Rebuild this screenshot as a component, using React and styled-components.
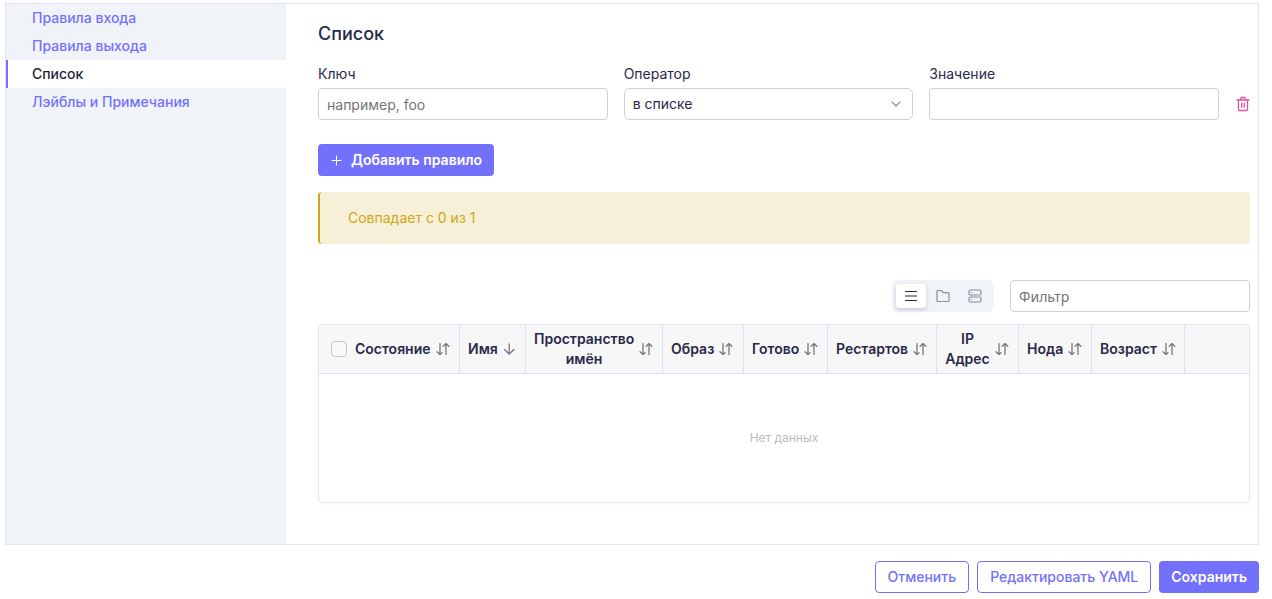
import React, { useState } from "react";
import styled, { createGlobalStyle, css } from "styled-components";

const GlobalStyle = createGlobalStyle`
  * {
    box-sizing: border-box;
  }
  body {
    margin: 0;
    background: #fff;
    color: #29294a;
    font: 400 14px/20px Inter, "Liberation Sans", sans-serif;
  }
  button, input, select {
    font: inherit;
    color: inherit;
  }
`;

const Page = styled.div`
  padding: 3px 13px 6px 5px;
`;

const Panel = styled.div`
  display: flex;
  border: 1px solid #e6e3fd;
`;

const Sidebar = styled.nav`
  flex: 0 0 280px;
  background: #f0f4f9;
`;

const SideLink = styled.a`
  display: block;
  padding: 4px 8px 4px 26px;
  font-weight: 500;
  color: #7371fc;
  text-decoration: none;
  ${(props) =>
    props.$active &&
    css`
      padding-left: 24px;
      border-left: 2px solid #7371fc;
      background: #fff;
      color: #1f1f38;
    `}
`;

const Content = styled.main`
  flex: 1;
  min-width: 0;
  padding: 18px 8px 41px 32px;
`;

const Title = styled.h2`
  margin: 0 0 18px;
  font-size: 18px;
  line-height: 24px;
  font-weight: 500;
`;

const Rule = styled.div`
  display: grid;
  grid-template-columns: repeat(3, minmax(0, 1fr)) 15px;
  gap: 16px;
  align-items: end;
`;

const Field = styled.div`
  display: flex;
  flex-direction: column;
  gap: 4px;
`;

const Label = styled.label`
  font-weight: 400;
`;

const control = css`
  width: 100%;
  height: 32px;
  padding: 0 8px;
  border: 1px solid #cfcfdc;
  border-radius: 4px;
  background: #fff;
  outline: none;
`;

const Input = styled.input`
  ${control};
  &::placeholder {
    color: #757575;
    opacity: 1;
  }
`;

const FilterInput = styled(Input)`
  width: 240px;
  font-family: "Noto Sans", sans-serif;
`;

const SelectBox = styled.div`
  position: relative;
  svg {
    position: absolute;
    top: 8px;
    right: 9px;
    pointer-events: none;
  }
`;

const Select = styled.select`
  ${control};
  border-radius: 6px;
  appearance: none;
`;

const IconButton = styled.button`
  display: flex;
  align-items: center;
  justify-content: flex-start;
  height: 32px;
  padding: 0;
  border: 0;
  background: none;
  color: #e0529c;
  cursor: pointer;
  svg {
    flex: none;
  }
`;

const Button = styled.button`
  display: inline-flex;
  align-items: center;
  gap: 8px;
  height: 32px;
  padding: 0 12px;
  border: ${(props) => (props.$primary ? "0" : "1px solid #7371fc")};
  border-radius: 4px;
  background: ${(props) => (props.$primary ? "#7371fc" : "#fff")};
  color: ${(props) => (props.$primary ? "#fff" : "#7371fc")};
  font-weight: ${(props) => (props.$primary ? 600 : 500)};
  cursor: pointer;
`;

const AddRow = styled.div`
  display: flex;
  margin: 24px 0 16px;
`;

const Banner = styled.div`
  padding: 16px 28px;
  border-left: 2px solid #cfa616;
  border-radius: 4px;
  background: #f6f0d9;
  color: #cfa616;
`;

const Toolbar = styled.div`
  display: flex;
  justify-content: flex-end;
  gap: 16px;
  margin: 36px 0 12px;
`;

const Toggle = styled.div`
  display: flex;
  gap: 2px;
  padding: 4px;
  border-radius: 6px;
  background: #f0f4f9;
`;

const ToggleButton = styled.button`
  display: flex;
  align-items: center;
  justify-content: center;
  width: 30px;
  height: 24px;
  padding: 0;
  border: 0;
  border-radius: 4px;
  background: ${(props) => (props.$active ? "#fff" : "none")};
  box-shadow: ${(props) => (props.$active ? "0 2px 4px rgba(41, 41, 74, 0.2)" : "none")};
  color: ${(props) => (props.$active ? "#29294a" : "#8c8ca1")};
  cursor: pointer;
`;

const TableFrame = styled.div`
  overflow: hidden;
  border: 1px solid #e6e3fd;
  border-radius: 4px;
`;

const Table = styled.table`
  width: 100%;
  table-layout: fixed;
  border-collapse: separate;
  border-spacing: 0;
`;

const Th = styled.th`
  width: ${(props) => (props.$width ? `${props.$width}px` : "auto")};
  height: 49px;
  padding: 0 8px;
  border-bottom: 1px solid #e0ddfa;
  border-right: 1px solid #e0ddfa;
  background: #f7f7f7;
  font-weight: 600;
  &:first-child {
    padding-left: 12px;
  }
  &:last-child {
    border-right: 0;
  }
`;

const HeadCell = styled.div`
  display: flex;
  align-items: center;
  gap: 8px;
`;

const SortButton = styled.button`
  display: flex;
  align-items: center;
  gap: 4px;
  padding: 0;
  border: 0;
  background: none;
  font-weight: 600;
  text-align: center;
  cursor: pointer;
  svg {
    flex: none;
    color: #77777f;
  }
`;

const Checkbox = styled.input`
  appearance: none;
  flex: none;
  width: 16px;
  height: 16px;
  margin: 0;
  border: 1px solid #c4c4cc;
  border-radius: 4px;
  background: #f9f9f9;
`;

const Empty = styled.td`
  height: 128px;
  padding: 0;
  font-size: 12px;
  text-align: center;
  color: #bcbcbc;
`;

const Footer = styled.footer`
  display: flex;
  justify-content: flex-end;
  gap: 8px;
  margin-top: 16px;
`;

const Icon = ({ children, size = 16, width = 1.2 }) => (
  <svg
    width={size}
    height={size}
    viewBox={`0 0 ${size} ${size}`}
    fill="none"
    stroke="currentColor"
    strokeWidth={width}
    strokeLinecap="round"
    strokeLinejoin="round"
    aria-hidden="true"
  >
    {children}
  </svg>
);

const SortIcon = () => (
  <Icon width={1.3}>
    <path d="M5 2.5v11M2 10.8l3 2.7l2-1.8M11 13.5v-11M8.2 5.2l2.8-2.7l2.8 2.7" />
  </Icon>
);

const DownIcon = () => (
  <Icon width={1.3}>
    <path d="M7.2 3v10M2.5 8.5L7.2 13l4.7-4.5" />
  </Icon>
);

const TrashIcon = () => (
  <Icon width={1.3}>
    <path d="M2 4h12M3.5 4v9.5a1 1 0 0 0 1 1h7a1 1 0 0 0 1-1V4M5.5 4l.7-2.5h3.6l.7 2.5M6.8 7.2v4M9.2 7.2v4" />
  </Icon>
);

const PlusIcon = () => (
  <Icon size={13} width={1}>
    <path d="M2 6.5h9M6.5 2v9" />
  </Icon>
);

const ListIcon = () => (
  <Icon width={1.1}>
    <path d="M2.5 3.5h11M2.5 8h11M2.5 12.5h11" />
  </Icon>
);

const FolderIcon = () => (
  <Icon>
    <path d="M2 3.5a1 1 0 0 1 1-1h3.2l2 2.2H13a1 1 0 0 1 1 1v6.8a1 1 0 0 1-1 1H3a1 1 0 0 1-1-1z" />
  </Icon>
);

const GroupIcon = () => (
  <Icon>
    <rect x="2" y="2" width="12" height="5" rx="1.5" />
    <rect x="2" y="9" width="12" height="5" rx="1.5" />
    <path d="M4.5 4.5h.1M4.5 11.5h.1" />
  </Icon>
);

const links = ["Правила входа", "Правила выхода", "Список", "Лэйблы и Примечания"];

const views = [
  { id: "list", title: "Список", icon: <ListIcon /> },
  { id: "folder", title: "Папки", icon: <FolderIcon /> },
  { id: "group", title: "Группы", icon: <GroupIcon /> },
];

const columns = [
  { title: "Состояние", width: 141 },
  { title: "Имя", width: 66, sorted: true },
  { title: "Пространство имён", width: 137 },
  { title: "Образ", width: 81 },
  { title: "Готово", width: 84 },
  { title: "Рестартов", width: 109 },
  { title: "IP Адрес", width: 82 },
  { title: "Нода", width: 73 },
  { title: "Возраст", width: 93 },
];

export default function App() {
  const [view, setView] = useState("list");

  return (
    <Page>
      <GlobalStyle />
      <Panel>
        <Sidebar>
          {links.map((link) => (
            <SideLink key={link} href="#" $active={link === "Список"}>
              {link}
            </SideLink>
          ))}
        </Sidebar>
        <Content>
          <Title>Список</Title>
          <Rule>
            <Field>
              <Label htmlFor="key">Ключ</Label>
              <Input id="key" placeholder="например, foo" />
            </Field>
            <Field>
              <Label htmlFor="operator">Оператор</Label>
              <SelectBox>
                <Select id="operator">
                  <option>в списке</option>
                </Select>
                <Icon>
                  <path d="M4 6l4 4l4-4" stroke="#8c8ca1" />
                </Icon>
              </SelectBox>
            </Field>
            <Field>
              <Label htmlFor="value">Значение</Label>
              <Input id="value" />
            </Field>
            <IconButton type="button" aria-label="Удалить">
              <TrashIcon />
            </IconButton>
          </Rule>
          <AddRow>
            <Button type="button" $primary>
              <PlusIcon />
              Добавить правило
            </Button>
          </AddRow>
          <Banner>Совпадает с 0 из 1</Banner>
          <Toolbar>
            <Toggle>
              {views.map(({ id, title, icon }) => (
                <ToggleButton
                  key={id}
                  type="button"
                  aria-label={title}
                  $active={view === id}
                  onClick={() => setView(id)}
                >
                  {icon}
                </ToggleButton>
              ))}
            </Toggle>
            <FilterInput placeholder="Фильтр" aria-label="Фильтр" />
          </Toolbar>
          <TableFrame>
            <Table>
              <thead>
                <tr>
                  {columns.map(({ title, width, sorted }, i) => (
                    <Th key={title} $width={width}>
                      <HeadCell>
                        {i === 0 && <Checkbox type="checkbox" aria-label="Выбрать все" />}
                        <SortButton type="button">
                          {title}
                          {sorted ? <DownIcon /> : <SortIcon />}
                        </SortButton>
                      </HeadCell>
                    </Th>
                  ))}
                  <Th />
                </tr>
              </thead>
              <tbody>
                <tr>
                  <Empty colSpan={columns.length + 1}>Нет данных</Empty>
                </tr>
              </tbody>
            </Table>
          </TableFrame>
        </Content>
      </Panel>
      <Footer>
        <Button type="button">Отменить</Button>
        <Button type="button">Редактировать YAML</Button>
        <Button type="button" $primary>
          Сохранить
        </Button>
      </Footer>
    </Page>
  );
}
